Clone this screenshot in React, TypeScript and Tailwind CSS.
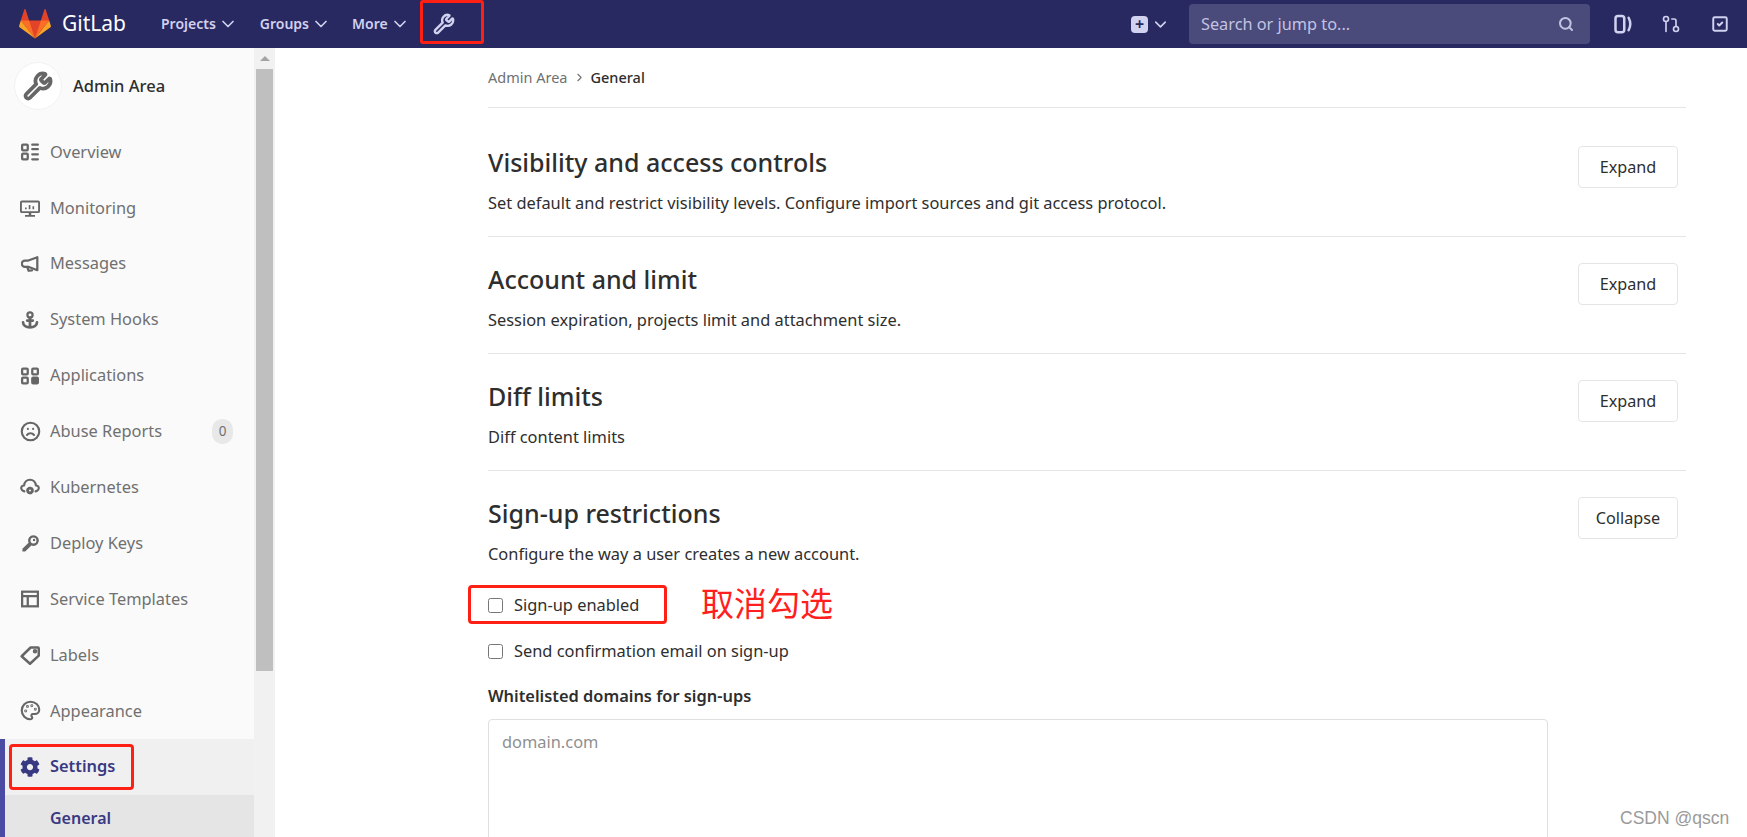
import type { ReactNode } from 'react';
import { ChevronDown, ChevronRight, Frown, GitPullRequest, Palette, Search, SquareCheck, Wrench } from 'lucide-react';
import { FaCog } from 'react-icons/fa';

function Svg({ children, className = 'h-[18px] w-[18px]' }: { children: ReactNode; className?: string }) {
  return (
    <svg viewBox="0 0 16 16" className={className} fill="none" stroke="currentColor" strokeWidth="2" strokeLinecap="round" strokeLinejoin="round">
      {children}
    </svg>
  );
}

function Tanuki() {
  return (
    <svg viewBox="0 0 36 36" className="h-[32px] w-[32px]">
      <path fill="#e24329" d="M2 14l9.38 9v-9l-4-12.28c-.205-.632-1.176-.632-1.38 0z" />
      <path fill="#e24329" d="M34 14l-9.38 9v-9l4-12.28c.205-.632 1.176-.632 1.38 0z" />
      <path fill="#e24329" d="M18 34.38 3 14h30z" />
      <path fill="#fc6d26" d="M18 34.38 11.38 14H2z" />
      <path fill="#fc6d26" d="M18 34.38 24.62 14H34z" />
      <path fill="#fca326" d="M2 14 .1 20.16c-.18.565 0 1.2.5 1.56l17.42 12.66z" />
      <path fill="#fca326" d="M34 14l1.9 6.16c.18.565 0 1.2-.5 1.56L18 34.38z" />
    </svg>
  );
}

const sideIcons: Record<string, ReactNode> = {
  Overview: (
    <Svg>
      <rect x="1" y="1.500" width="5" height="5" rx="0.800" />
      <rect x="1" y="9.500" width="5" height="5" rx="0.800" />
      <path d="M10 1.500h5M10 5.500h5M10 10h5M10 14.500h5" />
    </Svg>
  ),
  Monitoring: (
    <svg viewBox="0 0 16 16" className="h-[20px] w-[20px]" fill="currentColor">
      <path fillRule="evenodd" d="M1.500 2h13A1.500 1.500 0 0 1 16 3.500v7a1.500 1.500 0 0 1-1.500 1.500H1.500A1.500 1.500 0 0 1 0 10.500v-7A1.500 1.500 0 0 1 1.500 2zm0 1.500v7h13v-7z" />
      <path d="M7 12h2v1.500h3V15H4v-1.500h3zM4 7.500h1.300V9H4zM7 5.500h1.300V9H7zM10 6.500h1.300V9H10z" />
    </svg>
  ),
  Messages: (
    <Svg>
      <path d="M14.500 2v11.500L6.500 10.500H3.500a2.800 2.800 0 0 1 0-5.600h3z" />
      <path d="M5.500 10.500 6.800 14l3-.3" />
    </Svg>
  ),
  'System Hooks': (
    <Svg>
      <circle cx="8" cy="3.500" r="2.300" />
      <path d="M8 6v8M5.500 8.500h5M1.800 10c0 2.500 2.500 4.500 6.200 4.500s6.200-2 6.200-4.500" strokeWidth="2.400" />
    </Svg>
  ),
  Applications: (
    <Svg>
      <rect x="1" y="1.500" width="5" height="5" rx="0.800" />
      <rect x="10" y="1.500" width="5" height="5" rx="0.800" />
      <rect x="1" y="9.500" width="5" height="5" rx="0.800" />
      <rect x="10" y="9.500" width="5" height="5" rx="0.800" fill="currentColor" />
    </Svg>
  ),
  'Abuse Reports': <Frown className="h-[21px] w-[21px]" strokeWidth={2.4} />,
  Kubernetes: (
    <Svg className="h-[20px] w-[20px]">
      <path d="M3.500 11.500C1.800 11 .8 9.500 1 8.500c.2-1 1.200-1.700 2.300-1.700C3.500 4 5.500 2.200 8 2.200s4.500 1.800 4.700 4.600c1.100 0 2.100.7 2.300 1.700.2 1-.8 2.500-2.500 3" strokeWidth="1.700" />
      <circle cx="8" cy="10.800" r="2.400" fill="currentColor" strokeWidth="1.400" strokeDasharray="1.500 1" />
      <circle cx="8" cy="10.800" r="0.800" fill="#fafafa" stroke="none" />
    </Svg>
  ),
  'Deploy Keys': (
    <svg viewBox="0 0 16 16" className="h-[19px] w-[19px]" fill="currentColor">
      <path fillRule="evenodd" d="M10.500 1a4.500 4.500 0 1 1-1.800 8.620L3.500 14.800H1.200v-2.300l5.180-5.200A4.500 4.500 0 0 1 10.500 1zm0 2a2.500 2.500 0 1 0 0 5 2.500 2.500 0 0 0 0-5z" />
      <circle cx="11" cy="5" r="1" />
    </svg>
  ),
  'Service Templates': (
    <svg viewBox="0 0 16 16" className="h-[18px] w-[18px]" fill="none" stroke="currentColor" strokeWidth="2">
      <rect x="1" y="1.500" width="14" height="13" />
      <path d="M1 5.500h14M6 5.500v9" />
    </svg>
  ),
  Labels: (
    <Svg className="h-[20px] w-[20px]">
      <path d="M1.300 9 8.500 2h5.800a.7.700 0 0 1 .7.700V8.500L8 15z" />
      <circle cx="12" cy="5" r="0.800" />
    </Svg>
  ),
  Appearance: <Palette className="h-[21px] w-[21px]" strokeWidth={2.4} />,
};

const sideItems = ['Overview', 'Monitoring', 'Messages', 'System Hooks', 'Applications', 'Abuse Reports', 'Kubernetes', 'Deploy Keys', 'Service Templates', 'Labels', 'Appearance'];

function SideItem({ label }: { label: string }) {
  return (
    <div className="flex h-[55.900px] items-center text-[#707070]">
      <span className="flex w-[50px] shrink-0 justify-center pl-[10px] text-[#666]">{sideIcons[label]}</span>
      <span className="text-[16.400px]">{label}</span>
      {label === 'Abuse Reports' && (
        <span className="ml-auto mr-[21px] flex h-[25px] w-[21px] items-center justify-center rounded-[10px] bg-[#e8e8e8] text-[13.500px] text-[#707070]">0</span>
      )}
    </div>
  );
}

function Sidebar() {
  return (
    <aside className="flex w-[275px] shrink-0">
      <div className="w-[254px] shrink-0 bg-[#fafafa]">
        <div className="flex h-[75px] items-center pl-[14px]">
          <span className="flex h-[48px] w-[48px] items-center justify-center rounded-full border border-[#f2f2f2] bg-white text-[#666]">
            <Wrench className="h-[30px] w-[30px]" strokeWidth={3} />
          </span>
          <span className="ml-[11px] pt-[1px] text-[16.500px] font-medium text-[#2e2e2e]">Admin Area</span>
        </div>
        <div className="pt-[1px]">
          {sideItems.map((l) => <SideItem key={l} label={l} />)}
        </div>
        <div className="border-l-[5px] border-[#4b4ba3]">
          <div className="flex h-[56px] items-center bg-[#f0f0f0] font-semibold text-[#393982]">
            <span className="flex w-[45px] shrink-0 justify-center pl-[5px]"><FaCog className="h-[20px] w-[20px]" /></span>
            <span className="text-[16.400px]">Settings</span>
          </div>
          <div className="h-[50px] bg-[#e5e5e5] pl-[45px] pt-[11px] text-[16px] font-semibold text-[#393982]">General</div>
        </div>
      </div>
      <div className="flex w-[21px] flex-col items-center bg-[#f1f1f1] pt-[8px]">
        <span className="h-0 w-0 border-x-[5px] border-b-[5px] border-x-transparent border-b-[#a3a3a3]" />
        <span className="mt-[8px] h-[602px] w-[17px] bg-[#bfbfbf]" />
      </div>
    </aside>
  );
}

function Section({ title, desc, action = 'Expand', children }: { title: string; desc: string; action?: string; children?: ReactNode }) {
  return (
    <section className="border-b border-[#e5e5e5] last:border-b-0">
      <div className="flex items-start justify-between pt-[26px] pr-[8px]">
        <div>
          <h4 className="text-[25px] font-medium leading-[32px] text-[#2e2e2e]">{title}</h4>
          <p className="mt-[14px] text-[16.400px] leading-[22px] text-[#2e2e2e]">{desc}</p>
        </div>
        <button className="h-[42px] w-[100px] rounded-[4px] border border-[#e5e5e5] bg-white text-[16.200px] text-[#2e2e2e]">{action}</button>
      </div>
      {children ?? <div className="h-[22px]" />}
    </section>
  );
}

function Check({ label, className }: { label: string; className: string }) {
  return (
    <label className={`flex items-center text-[16.400px] text-[#2e2e2e] ${className}`}>
      <span className="mr-[11px] h-[15px] w-[15px] rounded-[2.500px] border border-[#767676] bg-white" />
      {label}
    </label>
  );
}

export default function App() {
  return (
    <div className="relative h-[837px] w-[1747px] overflow-hidden bg-white font-['Noto_Sans','Noto_Sans_CJK_SC',sans-serif]">
      <header className="flex h-[48px] items-center bg-[#292961] text-[#d1d1f0]">
        <div className="flex items-center pl-[19px] text-white">
          <Tanuki />
          <span className="ml-[11px] text-[21px]">GitLab</span>
        </div>
        <nav className="ml-[35px] flex items-center text-[14px] font-semibold leading-[20px]">
          <span className="flex items-center">Projects<ChevronDown className="ml-[2px] h-[20px] w-[20px]" strokeWidth={2} /></span>
          <span className="ml-[22px] flex items-center">Groups<ChevronDown className="ml-[2px] h-[20px] w-[20px]" strokeWidth={2} /></span>
          <span className="ml-[21px] flex items-center">More<ChevronDown className="ml-[2px] h-[20px] w-[20px]" strokeWidth={2} /></span>
          <Wrench className="ml-[23px] h-[22px] w-[22px]" strokeWidth={2.600} />
        </nav>
        <div className="ml-auto flex items-center">
          <span className="flex h-[17px] w-[17px] items-center justify-center rounded-[4px] bg-[#d1d1f0] text-[16px] font-bold leading-none text-[#292961]">+</span>
          <ChevronDown className="ml-[3px] h-[19px] w-[19px]" strokeWidth={2} />
          <div className="ml-[19px] flex h-[40px] w-[401px] items-center justify-between rounded-[4px] bg-[#4a4a7b] pl-[12px] pr-[16px] text-[16.300px] text-[#c3c3e2]">
            <span>Search or jump to...</span>
            <Search className="h-[16px] w-[16px]" strokeWidth={3} />
          </div>
          <Svg className="ml-[23px] h-[20px] w-[20px]">
            <rect x="2" y="1.500" width="7" height="13" rx="2" />
            <path d="M12.500 3c1.600 3 1.600 7 0 10" />
          </Svg>
          <GitPullRequest className="ml-[28px] h-[20px] w-[20px]" strokeWidth={2} />
          <SquareCheck className="ml-[30px] mr-[18px] h-[18px] w-[18px]" strokeWidth={2.600} />
        </div>
      </header>

      <div className="flex">
        <Sidebar />
        <main className="ml-[213px] w-[1198px]">
          <div className="flex h-[60px] items-start border-b border-[#e5e5e5] pt-[19px] text-[14.500px]">
            <span className="text-[#707070]">Admin Area</span>
            <ChevronRight className="mx-[5px] mt-[4px] h-[13px] w-[13px] text-[#707070]" />
            <span className="font-medium text-[#2e2e2e]">General</span>
          </div>
          <div className="pt-[12px]">
            <Section title="Visibility and access controls" desc="Set default and restrict visibility levels. Configure import sources and git access protocol." />
            <Section title="Account and limit" desc="Session expiration, projects limit and attachment size." />
            <Section title="Diff limits" desc="Diff content limits" />
            <Section title="Sign-up restrictions" desc="Configure the way a user creates a new account." action="Collapse">
              <div className="pt-[28px]">
                <Check label="Sign-up enabled" className="h-[24px]" />
                <Check label="Send confirmation email on sign-up" className="mt-[22px] h-[24px]" />
                <div className="mt-[22px] text-[16.400px] font-semibold leading-[22px] text-[#2e2e2e]">Whitelisted domains for sign-ups</div>
                <div className="mt-[12px] h-[160px] w-[1060px] rounded-[4px] border border-[#dfdfdf] pl-[13px] pt-[11px] text-[16.400px] leading-[22px] text-[#8f8f8f]">domain.com</div>
              </div>
            </Section>
          </div>
        </main>
      </div>

      {/* red annotations on top of the screenshot */}
      <div className="absolute left-[420px] top-0 h-[44px] w-[64px] rounded-[3px] border-[3px] border-[#ff2015]" />
      <div className="absolute left-[9px] top-[744px] h-[46px] w-[125px] rounded-[4px] border-[3px] border-[#ff2015]" />
      <div className="absolute left-[468px] top-[585px] h-[39px] w-[199px] rounded-[4px] border-[3px] border-[#ff2015]" />
      <div className="absolute left-[701px] top-[581px] text-[33px] leading-[46px] text-[#ff1f1f]">取消勾选</div>
      <div className="absolute left-[1620px] top-[807px] font-['Liberation_Sans',sans-serif] text-[17.500px] leading-[22px] text-[#9a9a9a]">CSDN @qscn</div>
    </div>
  );
}
